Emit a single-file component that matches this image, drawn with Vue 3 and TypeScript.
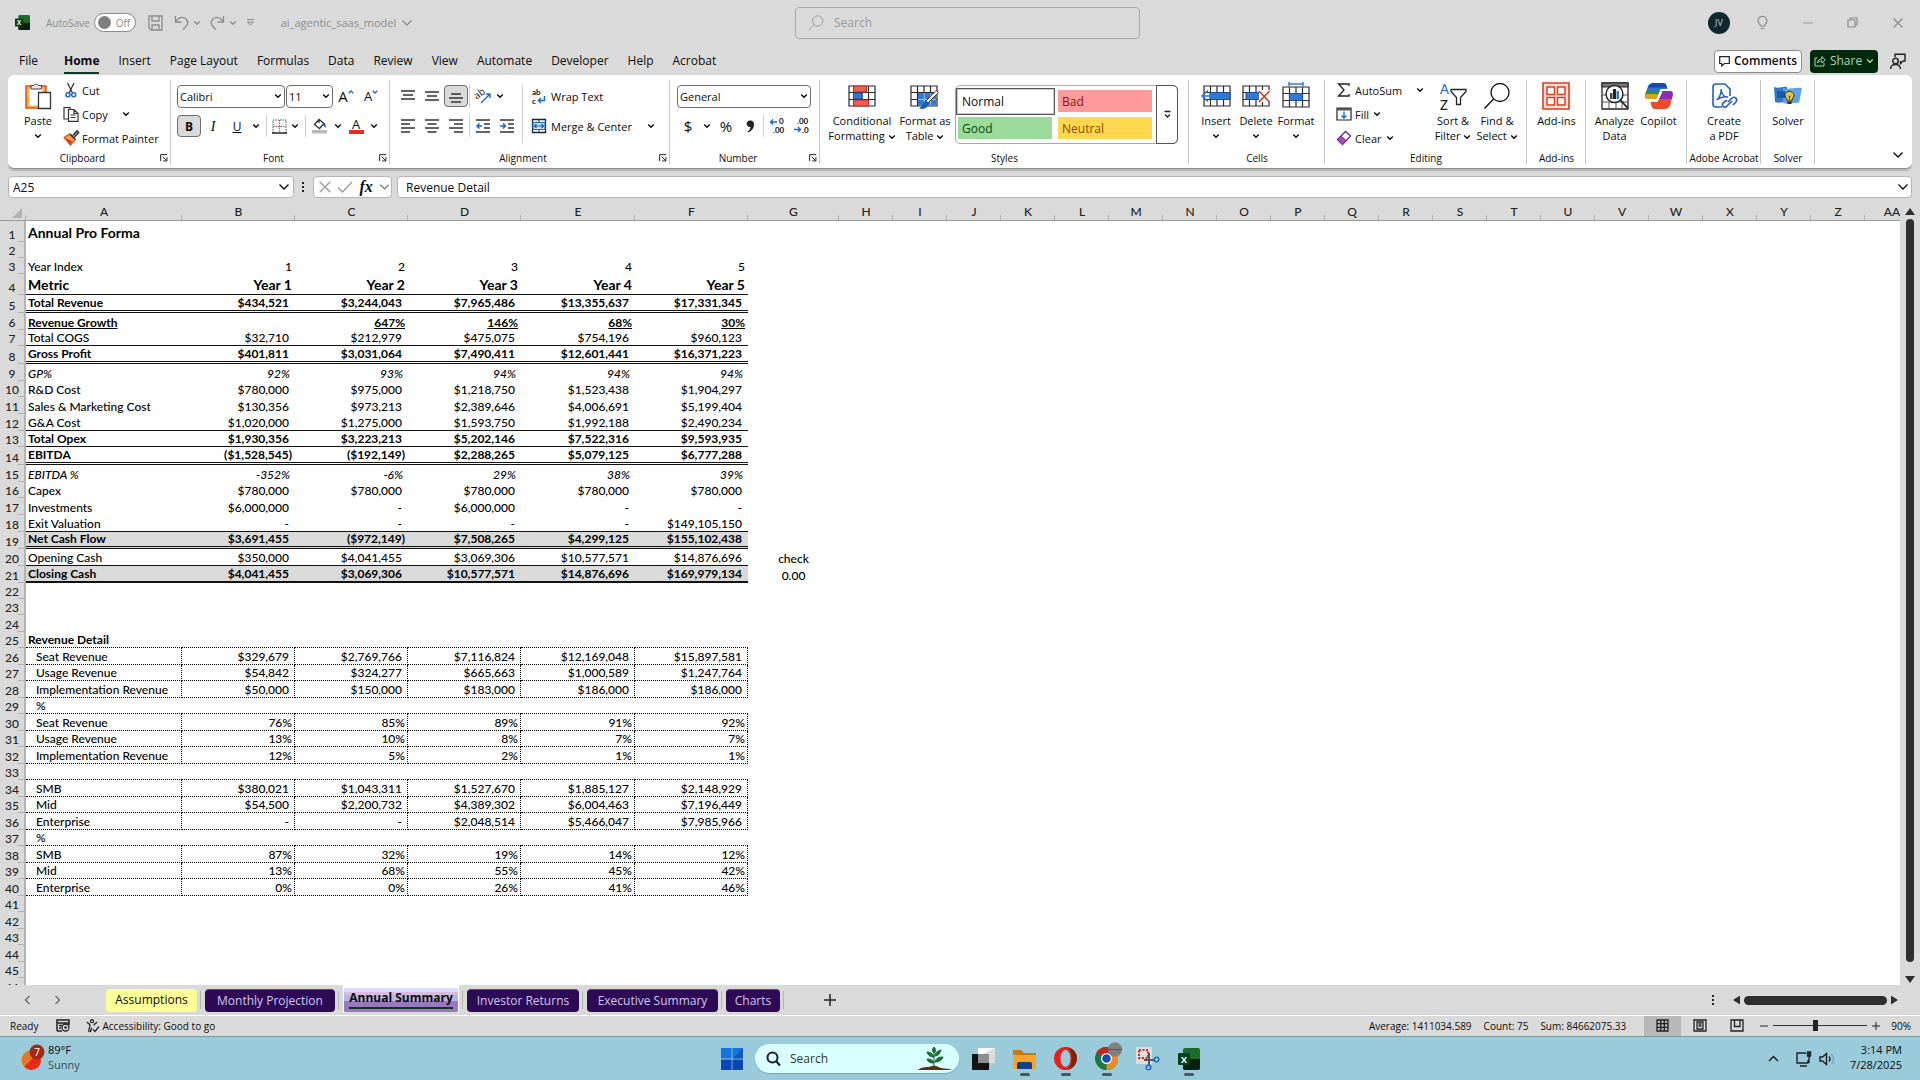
<script setup lang="ts">
import { ref } from 'vue'

type Line = 'thin' | 'double' | 'thick' | 'dots'
interface Row {
  cells: string[]
  h: number
  kind?: 'bold' | 'italic' | 'title' | 'head' | 'under' | 'total'
  line?: Line
  boxed?: boolean
  indent?: boolean
}

const menu = ['File', 'Home', 'Insert', 'Page Layout', 'Formulas', 'Data', 'Review', 'View', 'Automate', 'Developer', 'Help', 'Acrobat']

const letters = [...'ABCDEFGHIJKLMNOPQRSTUVWXYZ', 'AA']
const widths = [156, 113, 113, 113, 114, 113, 91]
const colWidth = (i: number): number => widths[i] ?? 54

const row = (h: number, text = '', extra: Partial<Row> = {}): Row => ({
  h,
  cells: text ? text.split('|') : [],
  ...extra,
})
const boxed: Partial<Row> = { boxed: true, indent: true, line: 'dots' }

const rows: Row[] = [
  row(21, 'Annual Pro Forma', { kind: 'title' }),
  row(16),
  row(16, 'Year Index|1|2|3|4|5'),
  row(21, 'Metric|Year 1|Year 2|Year 3|Year 4|Year 5', { kind: 'head', line: 'thin' }),
  row(18, 'Total Revenue|$434,521|$3,244,043|$7,965,486|$13,355,637|$17,331,345', { kind: 'bold', line: 'double' }),
  row(17, 'Revenue Growth||647%|146%|68%|30%', { kind: 'under' }),
  row(16, 'Total COGS|$32,710|$212,979|$475,075|$754,196|$960,123', { line: 'thin' }),
  row(18, 'Gross Profit|$401,811|$3,031,064|$7,490,411|$12,601,441|$16,371,223', { kind: 'bold', line: 'double' }),
  row(17, 'GP%|92%|93%|94%|94%|94%', { kind: 'italic' }),
  row(16, 'R&D Cost|$780,000|$975,000|$1,218,750|$1,523,438|$1,904,297'),
  row(17, 'Sales & Marketing Cost|$130,356|$973,213|$2,389,646|$4,006,691|$5,199,404'),
  row(17, 'G&A Cost|$1,020,000|$1,275,000|$1,593,750|$1,992,188|$2,490,234', { line: 'thin' }),
  row(16, 'Total Opex|$1,930,356|$3,223,213|$5,202,146|$7,522,316|$9,593,935', { kind: 'bold', line: 'thin' }),
  row(18, 'EBITDA|($1,528,545)|($192,149)|$2,288,265|$5,079,125|$6,777,288', { kind: 'bold', line: 'double' }),
  row(17, 'EBITDA %|-352%|-6%|29%|38%|39%', { kind: 'italic' }),
  row(16, 'Capex|$780,000|$780,000|$780,000|$780,000|$780,000'),
  row(17, 'Investments|$6,000,000|-|$6,000,000|-|-'),
  row(17, 'Exit Valuation|-|-|-|-|$149,105,150', { line: 'thin' }),
  row(17, 'Net Cash Flow|$3,691,455|($972,149)|$7,508,265|$4,299,125|$155,102,438', { kind: 'total', line: 'double' }),
  row(17, 'Opening Cash|$350,000|$4,041,455|$3,069,306|$10,577,571|$14,876,696|check', { line: 'thin' }),
  row(17, 'Closing Cash|$4,041,455|$3,069,306|$10,577,571|$14,876,696|$169,979,134|0.00', { kind: 'total', line: 'thick' }),
  row(16),
  row(16),
  row(17),
  row(16, 'Revenue Detail', { kind: 'bold', line: 'dots' }),
  row(17, 'Seat Revenue|$329,679|$2,769,766|$7,116,824|$12,169,048|$15,897,581', boxed),
  row(16, 'Usage Revenue|$54,842|$324,277|$665,663|$1,000,589|$1,247,764', boxed),
  row(17, 'Implementation Revenue|$50,000|$150,000|$183,000|$186,000|$186,000', boxed),
  row(16, '%', { indent: true, line: 'dots' }),
  row(17, 'Seat Revenue|76%|85%|89%|91%|92%', boxed),
  row(16, 'Usage Revenue|13%|10%|8%|7%|7%', boxed),
  row(17, 'Implementation Revenue|12%|5%|2%|1%|1%', boxed),
  row(16, '', { line: 'dots' }),
  row(17, 'SMB|$380,021|$1,043,311|$1,527,670|$1,885,127|$2,148,929', boxed),
  row(16, 'Mid|$54,500|$2,200,732|$4,389,302|$6,004,463|$7,196,449', boxed),
  row(17, 'Enterprise|-|-|$2,048,514|$5,466,047|$7,985,966', boxed),
  row(16, '%', { indent: true, line: 'dots' }),
  row(17, 'SMB|87%|32%|19%|14%|12%', boxed),
  row(16, 'Mid|13%|68%|55%|45%|42%', boxed),
  row(17, 'Enterprise|0%|0%|26%|41%|46%', boxed),
  row(16), row(17), row(16), row(17), row(16), row(17),
]

const cellClass = (r: Row, c: number): (string | false | undefined)[] => {
  const t = r.cells[c] ?? ''
  if (c > 5) return [c === 6 && 'check']
  return [
    r.kind,
    r.line,
    r.boxed && 'boxed',
    c === 0 ? (r.indent ? 'label indent' : 'label') : 'num',
    c > 0 && (t.startsWith('$') || t === '-') && 'money',
  ]
}

const sheets = [
  { name: 'Assumptions', width: 91, look: 'yellow' },
  { name: 'Monthly Projection', width: 130, look: 'purple' },
  { name: 'Annual Summary', width: 116, look: 'active' },
  { name: 'Investor Returns', width: 112, look: 'purple' },
  { name: 'Executive Summary', width: 131, look: 'purple' },
  { name: 'Charts', width: 54, look: 'purple' },
]

const autosave = ref(false)
const query = ref('')
const taskQuery = ref('')
const cellRef = ref('A25')
const formula = ref('Revenue Detail')
const zoom = ref(90)
</script>

<template>
  <svg class="defs" aria-hidden="true">
    <symbol id="chev" viewBox="0 0 8 6"><path d="M1.2 1.4 4 4.2l2.8-2.8" fill="none" stroke="currentColor" stroke-width="1.4" /></symbol>
    <symbol id="wide" viewBox="0 0 12 8"><path d="M1.5 1.5 6 6l4.500-4.500" fill="none" stroke="currentColor" stroke-width="1.3" /></symbol>
    <symbol id="corner" viewBox="0 0 9 9"><path d="M.7 8V.7H8M3 3l4.500 4.500M7.800 3.500v4.300H3.500" fill="none" stroke="#222" stroke-width="1.1" /></symbol>
    <symbol id="excel" viewBox="0 0 22 22">
      <rect x="5" y="0" width="17" height="22" rx="2" fill="#1a6b2a" /><path d="M5 11h17v9a2 2 0 0 1-2 2H7a2 2 0 0 1-2-2z" fill="#08210f" />
      <path d="M13 5h9v6h-9z" fill="#1f6d2c" /><rect y="5" width="12" height="12" rx="1" fill="#07401a" />
      <text x="6" y="14.500" font-size="9" font-weight="700" text-anchor="middle" fill="#fff" font-family="Open Sans, sans-serif">X</text>
    </symbol>
    <symbol id="grid" viewBox="0 0 28 22">
      <path d="M1 1h26v20H1z" fill="#fff" /><path d="M1 1h26v20H1zM1 7.500h26M1 14.500h26M7.500 1v20M14 1v20M20.500 1v20" fill="none" stroke="#2b2b2b" stroke-width="1.2" />
    </symbol>
    <symbol id="lens" viewBox="0 0 28 28"><circle cx="17" cy="10.500" r="9" fill="none" stroke="currentColor" stroke-width="1.3" /><path d="M10.500 17 1.500 26.500" stroke="currentColor" stroke-width="1.3" /></symbol>
  </svg>

  <div class="app">
    <header class="titlebar">
      <div class="left">
        <svg class="logo"><use href="#excel" /></svg>
        <label class="auto"><span>AutoSave</span><input v-model="autosave" type="checkbox" /><span class="toggle"><i></i>Off</span></label>
        <button class="q save" aria-label="Save"><svg width="15" height="16" viewBox="0 0 15 16"><path d="M1 1h13v14H3l-2-2zM4 1v5h7V1M4 15v-5h7v5" fill="none" stroke="#8c8c8c" stroke-width="1.300" /></svg></button>
        <button class="q" aria-label="Undo"><svg width="15" height="15" viewBox="0 0 15 15"><path d="M1.500 1v6h6M1.800 6.500C4 2.500 9 1 12 4s2 5.500-.5 8L9 14.500" fill="none" stroke="#8c8c8c" stroke-width="1.300" /></svg><svg class="c"><use href="#chev" /></svg></button>
        <button class="q" aria-label="Redo"><svg width="15" height="15" viewBox="0 0 15 15"><path d="M13.500 1v6h-6M13.200 6.500C11 2.500 6 1 3 4s-2 5.500.5 8L6 14.500" fill="none" stroke="#8c8c8c" stroke-width="1.300" /></svg><svg class="c"><use href="#chev" /></svg></button>
        <button class="q" aria-label="Customize toolbar"><svg width="9" height="9" viewBox="0 0 9 9"><path d="M1 1.500h7M1.500 4l3 3 3-3z" fill="none" stroke="#8c8c8c" /></svg></button>
        <button class="doc">ai_agentic_saas_model<svg width="12" height="8"><use href="#wide" /></svg></button>
      </div>
      <label class="search"><svg width="16" height="16"><use href="#lens" /></svg><input v-model="query" placeholder="Search" aria-label="Search" /></label>
      <div class="right">
        <span class="avatar">JV</span>
        <button class="w" aria-label="Tips"><svg width="11" height="14" viewBox="0 0 11 14"><path d="M3.500 10C3.500 8 1 7.500 1 4.800a4.400 4.400 0 0 1 9 0C10 7.500 7.500 8 7.500 10zM3.800 12.500h3.500" fill="none" stroke="#8c8c8c" stroke-width="1.200" /></svg></button>
        <button class="w" aria-label="Minimize"><svg width="10" height="10" viewBox="0 0 10 10"><path d="M0 5h10" stroke="#999" /></svg></button>
        <button class="w" aria-label="Restore"><svg width="11" height="11" viewBox="0 0 11 11"><path d="M1 3h7v7H1zM3 3V1h7v7H8" fill="none" stroke="#8c8c8c" stroke-width="1.200" /></svg></button>
        <button class="w" aria-label="Close"><svg width="10" height="10" viewBox="0 0 10 10"><path d="m.5.5 9 9m0-9-9 9" stroke="#8c8c8c" stroke-width="1.200" /></svg></button>
      </div>
    </header>

    <nav class="menubar">
      <a v-for="m in menu" :key="m" href="#" :class="{ on: m === 'Home' }">{{ m }}</a>
      <span class="grow"></span>
      <button class="comments"><svg width="11" height="11" viewBox="0 0 11 11"><path d="M.7.7h9.600v6.800H5.500L2.700 10V7.500h-2z" fill="none" stroke="#222" stroke-width="1.200" /></svg>Comments</button>
      <button class="share"><svg width="12" height="12" viewBox="0 0 12 12"><path d="M3.500 3H1v8h9V8M3.500 8c0-3 2-4 4.500-4V1.500L11.300 5 8 8V6C6 6 4.500 6.500 3.500 8z" fill="none" stroke="#a9d8b4" /></svg>Share<svg class="c"><use href="#chev" /></svg></button>
      <button class="person" aria-label="Catch up"><svg width="17" height="17" viewBox="0 0 17 17"><circle cx="6.500" cy="8" r="2.800" fill="none" stroke="#222" stroke-width="1.400" /><path d="M1.500 16c0-6 10-6 10 0M6 4V1.200h10V8h-2l-2.500 2.500V8" fill="none" stroke="#222" stroke-width="1.400" /></svg></button>
    </nav>

    <section class="ribbon">
      <div class="group g-clip">
        <div class="body">
          <button class="big paste"><svg width="28" height="28" viewBox="0 0 28 28"><path d="M2 4h20v22H2z" fill="#f7a83c" stroke="#d8531d" stroke-width="1.500" /><path d="M5 6h14v18H5z" fill="#fff" stroke="#f0c070" /><path d="M7 7V3.500h3a2.500 2.500 0 0 1 4.500 0h3V7z" fill="#e8e8e8" stroke="#444" /><path d="M14.500 10.500h12v16h-12z" fill="#fff" stroke="#333" stroke-width="1.300" /></svg><span>Paste</span><svg class="c"><use href="#chev" /></svg></button>
          <div class="stack">
            <button class="line"><svg viewBox="0 0 16 16"><path d="M4.500 1 9.500 11M11 1 6 11" stroke="#333" stroke-width="1.300" /><circle cx="5" cy="12.800" r="2" fill="none" stroke="#1b6ac9" stroke-width="1.500" /><circle cx="10.700" cy="12.800" r="2" fill="none" stroke="#1b6ac9" stroke-width="1.500" /></svg>Cut</button>
            <button class="line"><svg viewBox="0 0 16 16"><path d="M5 13H1V1.500h6V4M5.500 3.500H11l4 4v7.800H5.500zM11 3.500v4h4M7.500 9h5M7.500 11.500h5" fill="none" stroke="#333" stroke-width="1.200" /></svg>Copy<svg class="c push"><use href="#chev" /></svg></button>
            <button class="line"><svg viewBox="0 0 16 16"><path d="M1 7.500 6.500 4l6 5.500-5 5.500z" fill="#f6a04a" stroke="#d8531d" stroke-width="1.200" /><path d="M1 7.500 7.500 15l1.500-4z" fill="#d8391d" /><path d="m7 4 5 5M10 5.500 14 1l1.500 1.500L11.500 7" fill="none" stroke="#333" stroke-width="1.700" /></svg>Format Painter</button>
          </div>
        </div>
        <div class="foot launch"><span>Clipboard</span><button aria-label="Clipboard settings"><svg><use href="#corner" /></svg></button></div>
      </div>

      <div class="group g-font">
        <div class="body rows">
          <div class="r r-a">
            <span class="pick family"><select aria-label="Font"><option>Calibri</option></select><svg class="c"><use href="#chev" /></svg></span>
            <span class="pick size"><select aria-label="Font size"><option>11</option></select><svg class="c"><use href="#chev" /></svg></span>
            <button class="ib lg" aria-label="Increase font size">A<svg class="sup" viewBox="0 0 6 4"><path d="m.7 3.300 2.300-2.300 2.300 2.300" fill="none" stroke="#1b6ac9" stroke-width="1.300" /></svg></button>
            <button class="ib md" aria-label="Decrease font size">A<svg class="sup" viewBox="0 0 6 4"><path d="m.7.7 2.300 2.300 2.300-2.300" fill="none" stroke="#1b6ac9" stroke-width="1.300" /></svg></button>
          </div>
          <div class="r">
            <button class="ib on"><b>B</b></button><button class="ib"><i class="serif">I</i></button><button class="ib"><u>U</u></button><button class="ch" aria-label="Underline options"><svg class="c"><use href="#chev" /></svg></button>
            <i class="sep"></i>
            <button class="ib w18" aria-label="Borders"><svg width="15" height="15" viewBox="0 0 15 15"><path d="M1 14V1h13v13" fill="none" stroke="#555" stroke-dasharray="1.500 1" /><path d="M7.500 1v13M1 7.500h13" stroke="#b55" stroke-dasharray="1.500 1" /><path d="M0 14h15" stroke="#222" stroke-width="1.500" /></svg></button><button class="ch" aria-label="Border options"><svg class="c"><use href="#chev" /></svg></button>
            <i class="sep"></i>
            <button class="ib w22" aria-label="Fill color"><svg width="16" height="16" viewBox="0 0 16 16"><path d="M7 1.500 2.500 6.500l5 4 4.500-5zM7 1.500V5" fill="none" stroke="#333" stroke-width="1.300" /><path d="M11.500 4.500c2 1 2.500 3 2 5.500l-2-2.500z" fill="#1b4f9c" /><path d="M0 12h15v3.500H0z" fill="#b9b9b9" /></svg></button><button class="ch" aria-label="Fill options"><svg class="c"><use href="#chev" /></svg></button>
            <button class="ib w22 ink" aria-label="Font color">A</button><button class="ch" aria-label="Font color options"><svg class="c"><use href="#chev" /></svg></button>
          </div>
        </div>
        <div class="foot launch"><span>Font</span><button aria-label="Font settings"><svg><use href="#corner" /></svg></button></div>
      </div>

      <div class="group g-align">
        <div class="body">
          <div class="rows">
            <div class="r">
              <button class="ib" aria-label="Top align"><svg width="14" height="14" viewBox="0 0 14 14"><path d="M0 2h14M2 6h10M0 10h14" stroke="#333" stroke-width="1.300" /></svg></button>
              <button class="ib" aria-label="Middle align"><svg width="14" height="14" viewBox="0 0 14 14"><path d="M0 3h14M2 7h10M0 11h14" stroke="#333" stroke-width="1.300" /></svg></button>
              <button class="ib on" aria-label="Bottom align"><svg width="14" height="14" viewBox="0 0 14 14"><path d="M2 5h10M0 9h14M2 13h10" stroke="#333" stroke-width="1.300" /></svg></button>
              <i class="sep tight"></i>
              <button class="ib" aria-label="Orientation"><svg width="17" height="16" viewBox="0 0 17 16"><text x="0" y="9" font-size="10" transform="rotate(-35 5 8)" fill="#111" font-family="Open Sans, sans-serif">ab</text><path d="m6 15 9-9m-4 0h4v4" fill="none" stroke="#1b6ac9" stroke-width="1.400" /></svg></button>
              <button class="ch sm" aria-label="Orientation options"><svg class="c"><use href="#chev" /></svg></button>
            </div>
            <div class="r">
              <button class="ib" aria-label="Align left"><svg width="14" height="14" viewBox="0 0 14 14"><path d="M0 1h14M0 5h9M0 9h14M0 13h9" stroke="#333" stroke-width="1.300" /></svg></button>
              <button class="ib" aria-label="Center"><svg width="14" height="14" viewBox="0 0 14 14"><path d="M0 1h14M2.500 5h9M0 9h14M2.500 13h9" stroke="#333" stroke-width="1.300" /></svg></button>
              <button class="ib" aria-label="Align right"><svg width="14" height="14" viewBox="0 0 14 14"><path d="M0 1h14M5 5h9M0 9h14M5 13h9" stroke="#333" stroke-width="1.300" /></svg></button>
              <i class="sep tight"></i>
              <button class="ib" aria-label="Decrease indent"><svg width="14" height="14" viewBox="0 0 14 14"><path d="M0 1h14M8 5h6M8 9h6M0 13h14" stroke="#333" stroke-width="1.300" /><path d="M6 7H1m2.500-2.500L1 7l2.500 2.500" fill="none" stroke="#1b6ac9" stroke-width="1.500" /></svg></button>
              <button class="ib" aria-label="Increase indent"><svg width="14" height="14" viewBox="0 0 14 14"><path d="M0 1h14M8 5h6M8 9h6M0 13h14" stroke="#333" stroke-width="1.300" /><path d="M0 7h5.500M3 4.500 5.500 7 3 9.500" fill="none" stroke="#1b6ac9" stroke-width="1.500" /></svg></button>
            </div>
          </div>
          <i class="tall"></i>
          <div class="rows">
            <button class="line r"><svg viewBox="0 0 16 16" font-size="8" fill="#111" font-family="Lato, sans-serif" font-weight="700"><text x="1" y="6.500">ab</text><text x="1" y="16">c</text><path d="M13.500 8v4.500H7.500M10 10l-2.500 2.500L10 15" fill="none" stroke="#1b6ac9" stroke-width="1.500" /></svg>Wrap Text</button>
            <button class="line r"><svg viewBox="0 0 16 16"><path d="M1.500 1.500h13v13h-13z" fill="#fff" stroke="#222" stroke-width="1.300" /><path d="M2 4.500h12v7H2z" fill="#cfe2fb" stroke="#1b6ac9" stroke-width="1.200" /><path d="M3.500 8h9M5.500 6l-2 2 2 2m5-4 2 2-2 2M8 1.500v3m0 7v3" fill="none" stroke="#1b5ab0" stroke-width="1.200" /></svg>Merge &amp; Center<svg class="c push"><use href="#chev" /></svg></button>
          </div>
        </div>
        <div class="foot launch"><span>Alignment</span><button aria-label="Alignment settings"><svg><use href="#corner" /></svg></button></div>
      </div>

      <div class="group g-num">
        <div class="body rows">
          <div class="r"><span class="pick format"><select aria-label="Number format"><option>General</option></select><svg class="c"><use href="#chev" /></svg></span></div>
          <div class="r">
            <button class="ib lg">$</button><button class="ch" aria-label="Currency options"><svg class="c"><use href="#chev" /></svg></button><button class="ib lg">%</button>
            <button class="ib" aria-label="Comma style"><svg width="9" height="13" viewBox="0 0 9 13"><path d="M4.500.5A3.300 3.300 0 1 0 4.500 7c-.2 2-1.200 3.500-3 4.500l.8 1C6 11 8 8 8 4.500A3.600 3.600 0 0 0 4.500.5z" fill="#222" /></svg></button>
            <i class="sep tight"></i>
            <button class="ib" aria-label="Increase decimal"><svg width="16" height="16" viewBox="0 0 16 16" font-size="8" fill="#111" font-family="Lato, sans-serif" font-weight="700"><text x="10" y="6">0</text><text x="4" y="15">.00</text><path d="M8 4H1.500M4 1.500 1.500 4 4 6.500" fill="none" stroke="#1b6ac9" stroke-width="1.400" /></svg></button>
            <button class="ib" aria-label="Decrease decimal"><svg width="16" height="16" viewBox="0 0 16 16" font-size="8" fill="#111" font-family="Lato, sans-serif" font-weight="700"><text x="4" y="6">.00</text><text x="9" y="15">.0</text><path d="M1 11.500h6.500M5 9l2.500 2.500L5 14" fill="none" stroke="#1b6ac9" stroke-width="1.400" /></svg></button>
          </div>
        </div>
        <div class="foot launch"><span>Number</span><button aria-label="Number settings"><svg><use href="#corner" /></svg></button></div>
      </div>

      <div class="group g-styles">
        <div class="body">
          <button class="big cond"><svg width="28" height="28" viewBox="0 -3 28 28"><use href="#grid" width="28" height="22" /><path d="M5.500 1h13v6h-13zM5.500 15h15v6h-15z" fill="#ec5f55" stroke="#c8281e" /><path d="M5.500 8h8.500v6H5.500z" fill="#2f78d6" stroke="#1b4f9c" /></svg><span>Conditional<br />Formatting <svg class="c"><use href="#chev" /></svg></span></button>
          <button class="big fat"><svg width="30" height="28" viewBox="0 -3 30 28"><use href="#grid" width="28" height="22" /><path d="M8 8h18v12.500H8z" fill="#2f78d6" /><path d="M14.300 8v12.500M20.600 8v12.500M8 14.500h18" stroke="#9cc2f2" /><path d="M28.500 7.500 18 18l-2-2L26 5.500z" fill="#fff" stroke="#333" /><path d="M16 16l2.500 2.500C18 24 12 24.500 9 23.500c3-1 3-6 7-7.500z" fill="#1b5fb4" /></svg><span>Format as<br />Table <svg class="c"><use href="#chev" /></svg></span></button>
          <div class="gallery">
            <button class="normal">Normal</button><button class="bad">Bad</button><button class="good">Good</button><button class="neutral">Neutral</button>
            <button class="more" aria-label="More styles"><svg width="9" height="9" viewBox="0 0 9 9"><path d="M1.500 1.500h6M2 4.500 4.500 7 7 4.500" fill="none" stroke="#222" stroke-width="1.300" /></svg></button>
          </div>
        </div>
        <div class="foot"><span>Styles</span></div>
      </div>

      <div class="group g-cells">
        <div class="body">
          <button class="big w40"><svg width="30" height="28" viewBox="-2 -3 30 28"><use href="#grid" width="28" height="22" /><path d="M7 7.500h20v7H7z" fill="#2f78d6" stroke="#1b4f9c" /><path d="M14 11H-1m6-5.500L-1 11l6 5.500" fill="none" stroke="#2f78d6" stroke-width="1.600" /></svg><span>Insert</span><svg class="c"><use href="#chev" /></svg></button>
          <button class="big w40"><svg width="28" height="28" viewBox="0 -3 28 28"><use href="#grid" width="28" height="22" /><path d="M4 7.500h14v7H4z" fill="#2f78d6" stroke="#1b4f9c" /><path d="M17 5h11v12H17z" fill="#fff" /><path d="m17 6 10.500 11m0-11L17 17" stroke="#e5281c" stroke-width="1.500" /></svg><span>Delete</span><svg class="c"><use href="#chev" /></svg></button>
          <button class="big w40"><svg width="28" height="28" viewBox="0 -4 28 28"><use href="#grid" width="28" height="22" /><path d="M7.500 7.500h13v7h-13z" fill="#2f78d6" stroke="#1b4f9c" /><path d="M7-2h14M7-4v4m14-4v4" stroke="#2f78d6" stroke-width="1.500" /></svg><span>Format</span><svg class="c"><use href="#chev" /></svg></button>
        </div>
        <div class="foot"><span>Cells</span></div>
      </div>

      <div class="group g-edit">
        <div class="body">
          <div class="stack">
            <button class="line"><svg viewBox="0 0 16 16"><path d="M13 4V2H2.500L8 8l-5.500 6H13v-2" fill="none" stroke="#222" stroke-width="1.300" /></svg>AutoSum<svg class="c push"><use href="#chev" /></svg></button>
            <button class="line"><svg viewBox="0 0 16 16"><path d="M1 2h14v12H1z" fill="#fff" stroke="#222" stroke-width="1.200" /><path d="M1 2h14v2.500H1z" fill="#555" /><path d="M8 5.500V12M5.500 9.500 8 12l2.500-2.500" fill="none" stroke="#1b6ac9" stroke-width="1.400" /></svg>Fill<svg class="c near"><use href="#chev" /></svg></button>
            <button class="line"><svg viewBox="0 0 16 16"><path d="M1.500 9.500 9.500 1.500l5 4.500-8 8.500z" fill="#fff" stroke="#6b2b8c" stroke-width="1.300" /><path d="M1.500 9.500 5 6l5 4.500-3.500 4z" fill="#b04aa8" stroke="#6b2b8c" /></svg>Clear<svg class="c near"><use href="#chev" /></svg></button>
          </div>
          <button class="big w44"><svg width="28" height="28" viewBox="0 0 28 28" font-size="13" font-family="Lato, sans-serif"><text x="1" y="12" fill="#1b6ac9">A</text><text x="1" y="28" fill="#222">Z</text><path d="M12 7.500h15v2l-5.500 6v7h-4v-7l-5.500-6z" fill="none" stroke="#222" stroke-width="1.300" /></svg><span>Sort &amp;<br />Filter <svg class="c"><use href="#chev" /></svg></span></button>
          <button class="big w44"><svg width="28" height="28"><use href="#lens" /></svg><span>Find &amp;<br />Select <svg class="c"><use href="#chev" /></svg></span></button>
        </div>
        <div class="foot"><span>Editing</span></div>
      </div>

      <div class="group g-add">
        <div class="body mid">
          <button class="big"><svg width="28" height="28" viewBox="0 0 28 28"><path d="M1 1h26v26H1z" fill="#fbe3dc" stroke="#e03a1c" stroke-width="1.600" /><path d="M5 5h7.500v7.500H5zM15.500 5H23v7.500h-7.500zM5 15.500h7.500V23H5zM15.500 15.500H23V23h-7.500z" fill="#fff" stroke="#e03a1c" stroke-width="1.500" /></svg><span>Add-ins</span></button>
        </div>
        <div class="foot"><span>Add-ins</span></div>
      </div>

      <div class="group g-data">
        <div class="body mid">
          <button class="big w44"><svg width="28" height="28" viewBox="0 0 28 28"><path d="M1 1h26v26H1z" fill="#fff" stroke="#222" stroke-width="1.300" /><path d="M1 1h26v4H1z" fill="#777" stroke="#222" /><path d="M1 13h26M1 20h26M8 20v7M15 20v7M21 20v7" stroke="#555" /><circle cx="13.500" cy="12" r="8.500" fill="#fff" stroke="#222" stroke-width="1.400" /><path d="m19.500 18 7 8" stroke="#222" stroke-width="1.800" /><path d="M9 11h2.500v6H9z" fill="#444" /><path d="M12 7h3v10h-3z" fill="#222" /><path d="M15.500 9H18v8h-2.500z" fill="#2f78d6" /></svg><span>Analyze<br />Data</span></button>
          <button class="big w44"><svg width="28" height="28" viewBox="0 0 28 28"><path d="M9 1h9c2 0 3 1 3.500 3l1 3h-7L12 17H3C0 17-.3 14 .7 11l2-6C3.800 2 6 1 9 1z" fill="#2878c8" /><path d="M9 1h9c2 0 3 1 3.500 3l.5 1.500H3C4 2 6 1 9 1z" fill="#1b45b0" /><path d="M1.500 9h13L12 17H3C0 17-.3 14 .7 11z" fill="#3a8a3c" /><path d="M.5 12H13l-1 5H3c-2.500 0-3-2-2.500-5z" fill="#d6a61c" /><path d="M19 27h-9c-2 0-3-1-3.500-3l-1-4h7L16 9h9c3 0 3.300 3 2.300 6l-2 8c-1 3-3.300 4-6.300 4z" fill="#ec4a2c" /><path d="M16 9h9c3 0 3.300 3 2.300 6l-.5 2H14z" fill="#8b2fb0" /><path d="M15 9.500h2.500L13 19h-2.500z" fill="#fff" /></svg><span>Copilot</span></button>
        </div>
        <div class="foot"></div>
      </div>

      <div class="group g-pdf">
        <div class="body mid">
          <button class="big"><svg width="28" height="28" viewBox="0 0 28 28"><path d="M12 25H6a3 3 0 0 1-3-3V5a3 3 0 0 1 3-3h9l5 5v7" fill="none" stroke="#1f5fd0" stroke-width="1.600" /><path d="M6.500 18c3-2 5-7 4.500-11 .5 5 3 8 7 8-4-1-8 .5-11.500 3z" fill="none" stroke="#1f5fd0" stroke-width="1.400" /><path d="m18 20 4-4c3-2 6 1 4 4l-3 3M22 19l-5 5c-2 3-6 0-4-3l4-3" fill="none" stroke="#1f5fd0" stroke-width="1.600" /></svg><span>Create<br />a PDF</span></button>
        </div>
        <div class="foot"><span>Adobe Acrobat</span></div>
      </div>

      <div class="group g-solver">
        <div class="body mid">
          <button class="big"><svg width="30" height="28" viewBox="0 0 30 28"><path d="M1 5c5 2 9-1 13 0v15c-4-1-7 2-12 0z" fill="#2f78c4" /><path d="M10 6c6 2 12-1 19 0l-3 15c-5-1-10 2-16 0z" fill="#5da2e2" /><path d="M4 9h8v7H4z" fill="#1b5ab0" /><path d="M14 19v-2c-3-2-2.500-7.500 2.500-7.500s5.500 5.500 2.500 7.500v2z" fill="#f9c83c" stroke="#333" /><path d="M14.500 19.500h4v2.500h-4z" fill="#333" /><path d="m15 13.500 1.500 1.500 1.500-1.500M16.500 15v3" fill="none" stroke="#444" /></svg><span>Solver</span></button>
        </div>
        <div class="foot"><span>Solver</span></div>
      </div>
      <button class="collapse" aria-label="Collapse ribbon"><svg width="12" height="8"><use href="#wide" /></svg></button>
    </section>

    <section class="formula">
      <label class="field name"><input v-model="cellRef" aria-label="Name box" /><svg width="12" height="8"><use href="#wide" /></svg></label>
      <i class="grip"></i>
      <div class="field fx">
        <button aria-label="Cancel"><svg width="12" height="12" viewBox="0 0 12 12"><path d="m.7.700 10.600 10.600m0-10.600L.7 11.300" stroke="#999" stroke-width="1.300" /></svg></button>
        <button aria-label="Enter"><svg width="16" height="12" viewBox="0 0 16 12"><path d="m1 6.500 4.500 4.500L15 1" fill="none" stroke="#999" stroke-width="1.300" /></svg></button>
        <button class="fn">fx</button>
        <button class="dim" aria-label="Function list"><svg width="11" height="8"><use href="#wide" /></svg></button>
      </div>
      <label class="field value"><input v-model="formula" aria-label="Formula" /><svg width="12" height="8"><use href="#wide" /></svg></label>
    </section>

    <main class="workspace">
      <div class="sheet">
        <table>
          <colgroup><col class="rowcol" /><col v-for="(l, i) in letters" :key="l" :style="{ width: colWidth(i) + 'px' }" /></colgroup>
          <thead><tr><th class="all"><i></i></th><th v-for="l in letters" :key="l" scope="col">{{ l }}</th></tr></thead>
          <tbody>
            <tr v-for="(r, n) in rows" :key="n" :style="{ height: r.h + 'px' }">
              <th scope="row">{{ n + 1 }}</th>
              <td v-for="(l, c) in letters" :key="l" :class="cellClass(r, c)">{{ r.cells[c] }}</td>
            </tr>
          </tbody>
        </table>
      </div>
      <div class="vbar"><i class="tri up"></i><i class="thumb"></i><i class="tri down"></i></div>
    </main>

    <footer class="tabs">
      <button class="nav" aria-label="Previous sheet"><svg width="7" height="10" viewBox="0 0 7 10"><path d="M5.500 1 1.500 5l4 4" fill="none" stroke="#666" stroke-width="1.300" /></svg></button>
      <button class="nav" aria-label="Next sheet"><svg width="7" height="10" viewBox="0 0 7 10"><path d="m1.500 1 4 4-4 4" fill="none" stroke="#666" stroke-width="1.300" /></svg></button>
      <div class="sheets">
        <template v-for="s in sheets" :key="s.name">
          <button class="tab" :class="s.look" :style="{ minWidth: s.width + 'px' }"><span>{{ s.name }}</span></button><i class="div"></i>
        </template>
      </div>
      <button class="plus" aria-label="New sheet"><svg width="12" height="12" viewBox="0 0 12 12"><path d="M6 0v12M0 6h12" stroke="#222" stroke-width="1.500" /></svg></button>
      <span class="grow"></span>
      <i class="grip"></i>
      <i class="tri lt"></i><i class="hthumb"></i><i class="tri rt"></i>
    </footer>

    <footer class="status">
      <span>Ready</span>
      <svg class="macro" width="14" height="13" viewBox="0 0 14 13"><path d="M1 12V1h12v5M1 4h12M3 6.500h3M3 9h2M1 12h5" fill="none" stroke="#222" stroke-width="1.500" /><circle cx="9.500" cy="8.500" r="3.500" fill="#dadada" stroke="#222" stroke-width="1.300" /><circle cx="9.500" cy="8.500" r="1.300" fill="#222" /></svg>
      <svg class="acc" width="14" height="14" viewBox="0 0 14 14"><circle cx="6" cy="2.200" r="1.500" fill="none" stroke="#222" stroke-width="1.200" /><path d="M1 3c1 2 3 1.500 3 3.500 0 3-2 4-1 6.500M11 3C10 5 8 4.500 8 6.500M6 9c-1 1-1 3-2 4" fill="none" stroke="#222" stroke-width="1.300" /><path d="m7 10.500 2 2 4-5" fill="none" stroke="#222" stroke-width="1.300" /></svg>
      <span>Accessibility: Good to go</span>
      <span class="grow"></span>
      <span class="stat">Average: 1411034.589</span><span class="stat">Count: 75</span><span class="stat">Sum: 84662075.33</span>
      <button class="view on" aria-label="Normal view"><svg width="13" height="13" viewBox="0 0 13 13"><path d="M1 1h11v11H1zM4.700 1v11M8.300 1v11M1 4.700h11M1 8.300h11" fill="none" stroke="#222" stroke-width="1.300" /></svg></button>
      <button class="view" aria-label="Page layout view"><svg width="14" height="13" viewBox="0 0 14 13"><path d="M1 1h12v11H1zM4 3h6v7H4zM5.500 5h3M5.500 7h3" fill="none" stroke="#222" stroke-width="1.300" /></svg></button>
      <button class="view" aria-label="Page break view"><svg width="14" height="13" viewBox="0 0 14 13"><path d="M1 1h12v11H1zM4.500 1v6.500H10V1" fill="none" stroke="#222" stroke-width="1.300" /></svg></button>
      <button class="step" aria-label="Zoom out"><svg width="8" height="8" viewBox="0 0 8 8"><path d="M0 4h8" stroke="#222" /></svg></button>
      <input v-model="zoom" class="zoom" type="range" min="10" max="190" aria-label="Zoom" />
      <button class="step" aria-label="Zoom in"><svg width="8" height="8" viewBox="0 0 8 8"><path d="M0 4h8M4 0v8" stroke="#222" /></svg></button>
      <span class="pct">90%</span>
    </footer>

    <footer class="taskbar">
      <div class="weather">
        <svg width="26" height="26" viewBox="0 0 26 26"><circle cx="11" cy="16" r="9.500" fill="#e87722" /><path d="M17.700 9.300A9.500 9.500 0 1 1 4.300 22.700z" fill="#e8291c" /><circle cx="17" cy="8" r="7.500" fill="#a12a14" /><text x="17" y="12" font-size="10" text-anchor="middle" fill="#fff" font-family="Open Sans, sans-serif">7</text></svg>
        <p>89°F<br /><span>Sunny</span></p>
      </div>
      <div class="apps">
        <button class="app-icon" aria-label="Start"><svg width="22" height="22" viewBox="0 0 22 22"><path d="M0 0h10.600v10.600H0zM11.400 0H22v10.600H11.400z" fill="#1473dc" /><path d="M0 11.400h10.600V22H0zM11.400 11.400H22V22H11.400z" fill="#0a46b4" /><path d="M22 0v10.600H12z" fill="#0f58b4" /></svg></button>
        <label class="pill">
          <svg width="15" height="15" viewBox="0 0 15 15"><circle cx="6.500" cy="6.500" r="5" fill="none" stroke="#1c1c24" stroke-width="2" /><path d="m10 10 4 4.500" stroke="#1c1c24" stroke-width="2" /></svg>
          <input v-model="taskQuery" placeholder="Search" aria-label="Search Windows" />
          <svg width="34" height="24" viewBox="0 0 34 24"><path d="M0 23c4-4 10-2 14-4 5-1 5 1 9 2s7 0 11 2z" fill="#5b2d12" /><path d="M16 20V2M16 16c-4 0-6-1-7-4 4 0 6 1 7 4zM17 15c4 0 7-2 8-5-4 0-7 1-8 5zM16 10c-4 0-6-2-7-5 4 0 6 2 7 5zM17 9c3 0 5-3 6-6-4 1-6 3-6 6zM16 6c-2-1-2-4 0-6 2 2 2 5 0 6z" fill="#157a35" stroke="#12602b" /></svg>
        </label>
        <button class="app-icon" aria-label="Task view"><svg width="24" height="22" viewBox="0 0 24 22"><path d="M0 6h17v16H0z" fill="#111" /><path d="M6 0h17v15H6z" fill="#dcdcdc" /><path d="M6 0h17L6 8z" fill="#fff" /><path d="M6 6h11v9H6z" fill="#8e8e8e" /></svg></button>
        <button class="app-icon run" aria-label="File Explorer"><svg width="23" height="22" viewBox="0 0 23 22"><path d="M0 2h8l3 3h12v16H0z" fill="#c97716" /><path d="M0 7h23v14H0z" fill="#f7a52a" /><path d="M4 16a2 2 0 0 1 2-2h11a2 2 0 0 1 2 2v5H4z" fill="#123f8c" /></svg></button>
        <button class="app-icon run" aria-label="Opera"><svg width="23" height="23" viewBox="0 0 23 23"><circle cx="11.500" cy="11.500" r="11.500" fill="#e2231a" /><path d="M14 .3A11.500 11.500 0 0 1 14 22.700c5-5 5-17 0-22.400z" fill="#7a2512" /><ellipse cx="11.500" cy="11.500" rx="5" ry="8.500" fill="#9acbda" /></svg></button>
        <button class="app-icon run" aria-label="Chrome"><svg width="23" height="23" viewBox="0 0 23 23"><circle cx="11.500" cy="11.500" r="11.500" fill="#1d7a3c" /><path d="M11.500 11.500 1.500 5.800A11.500 11.500 0 0 1 21.500 5.800z" fill="#c3261b" /><path d="M11.500 11.500 21.500 5.800A11.500 11.500 0 0 1 11.500 23z" fill="#f08a24" /><circle cx="11.500" cy="11.500" r="5.500" fill="#fff" /><circle cx="11.500" cy="11.500" r="4.300" fill="#1550b8" /><circle cx="20" cy="2.500" r="7.200" fill="#808080" /><path d="M13 2.500h14" stroke="#555" /></svg></button>
        <button class="app-icon" aria-label="Snipping Tool"><svg width="24" height="24" viewBox="0 0 24 24"><path d="M0 0h16v17H0z" fill="#dedede" /><path d="M3 3h9v8H3z" fill="none" stroke="#c33020" stroke-width="2" stroke-dasharray="2 1.500" /><path d="M13 6v12M8 13h11" stroke="#555" stroke-width="2" /><circle cx="20.500" cy="12.500" r="2.300" fill="none" stroke="#1b6ac9" stroke-width="1.500" /><circle cx="12.500" cy="20.500" r="2.300" fill="none" stroke="#1b6ac9" stroke-width="1.500" /></svg></button>
        <button class="app-icon run" aria-label="Excel"><svg width="22" height="22"><use href="#excel" /></svg></button>
      </div>
      <div class="tray">
        <button aria-label="Hidden icons"><svg width="11" height="7" viewBox="0 0 11 7"><path d="M1 6l4.500-4.500L10 6" fill="none" stroke="#222" stroke-width="1.500" /></svg></button>
        <svg class="net" width="16" height="16" viewBox="0 0 16 16"><path d="M10 2H1v10h11V9M4 15h7M13 1v5M11.500 1h3v4h-3zM13 6v6" fill="none" stroke="#222" stroke-width="1.400" /></svg>
        <svg width="16" height="14" viewBox="0 0 16 14"><path d="M1 5h2.500L7.500 1.500v11L3.500 9H1z" fill="none" stroke="#222" stroke-width="1.400" /><path d="M10 4.500c1.300 1.500 1.300 3.500 0 5" fill="none" stroke="#222" stroke-width="1.300" /><path d="M12.500 2c2.500 3 2.500 7 0 10" fill="none" stroke="#7a9cc4" stroke-width="1.300" /></svg>
        <p>3:14 PM<br />7/28/2025</p>
      </div>
    </footer>
  </div>
</template>

<style>
html, body { margin: 0; background: #dadada; }
</style>

<style scoped>
* { box-sizing: border-box; }
.defs { position: absolute; width: 0; height: 0; }
.app { display: flex; flex-direction: column; height: 100vh; overflow: hidden; background: #dadada; color: #0c0c0c; font: 500 12px/16px "Open Sans", "Noto Sans", sans-serif; }
button, input, select { margin: 0; padding: 0; border: 0; background: none; font: inherit; color: inherit; outline: 0; appearance: none; border-radius: 0; }
button { display: flex; align-items: center; justify-content: center; }
svg { flex: none; overflow: visible; }
p { margin: 0; }
.grow { flex: 1; }
.c { width: 8px; height: 6px; }
.grip { width: 2px; height: 11px; background: repeating-linear-gradient(#222 0 2px, transparent 2px 4px); }

.titlebar { display: grid; grid-template-columns: 1fr 345px 1fr; align-items: center; height: 45px; padding-left: 15px; color: #8c8c8c; font-weight: 400; }
.left { display: flex; align-items: center; }
.logo { width: 15px; height: 15px; }
.auto { display: flex; align-items: center; gap: 4px; margin-left: 16px; font-size: 10px; }
.auto input { position: absolute; opacity: 0; }
.toggle { display: flex; align-items: center; gap: 5px; width: 42px; height: 19px; padding-left: 3px; border: 1px solid #8c8c8c; border-radius: 10px; background: #fff; }
.toggle i { width: 13px; height: 13px; border-radius: 50%; background: #7f7f7f; }
.q { gap: 4px; margin-left: 9px; }
.save { margin: 0 2px 0 12px; }
.doc { gap: 5px; margin-left: 26px; font-size: 11px; }
.search { display: flex; align-items: center; gap: 10px; height: 32px; padding: 0 12px; border: 1px solid #a8a8a8; border-radius: 4px; }
.search input { flex: 1; }
.search input::placeholder { color: #999; opacity: 1; }
.right { display: flex; align-items: center; justify-content: flex-end; }
.avatar { width: 22px; height: 22px; margin-right: 10px; border-radius: 50%; background: #10282f; color: #b6cdd6; font-size: 9px; line-height: 22px; text-align: center; }
.w { width: 45px; height: 30px; }

.menubar { display: flex; align-items: center; height: 30px; padding: 2px 14px 0 19px; }
.menubar a { height: 26px; margin-right: 19px; color: #0c0c0c; line-height: 26px; text-decoration: none; }
.menubar a:first-child { margin-right: 26px; }
.menubar a.on { border-bottom: 2px solid #0d3b20; font-weight: 700; }
.comments { gap: 4px; width: 88px; height: 23px; border: 1px solid #8c8c8c; border-radius: 4px; background: #fff; font-weight: 600; }
.share { gap: 4px; width: 68px; height: 23px; margin-left: 8px; border-radius: 4px; background: #00280b; color: #a9d8b4; }
.person { width: 17px; margin-left: 11px; }

.ribbon { display: flex; height: 94px; margin: 0 8px; border-bottom: 1px solid #8f8f8f; border-radius: 6px; background: #fff; box-shadow: 0 2px 1px #b4b4b4; font-size: 11px; line-height: 15px; }
.group { display: flex; flex: none; flex-direction: column; padding-top: 3px; background: linear-gradient(#c6c6c6, #c6c6c6) right center / 1px 84px no-repeat; }
.body { display: flex; height: 72px; }
.mid { justify-content: center; }
.foot { display: grid; align-items: center; height: 16px; font-size: 10px; justify-items: center; white-space: nowrap; }
.foot > * { grid-area: 1 / 1; }
.foot button { justify-self: end; width: 14px; }
.foot svg { width: 8px; height: 8px; }
.launch span { padding-right: 14px; }
.g-clip { width: 163px; }
.g-font { width: 219px; }
.g-align { width: 280px; }
.g-num { width: 150px; }
.g-styles { width: 369px; }
.g-cells { width: 136px; }
.g-edit { width: 202px; }
.g-add { width: 59px; }
.g-data { width: 101px; }
.g-pdf { width: 74px; }
.g-solver { width: 54px; }
.big { flex-direction: column; justify-content: flex-start; padding-top: 4px; line-height: 15px; white-space: nowrap; }
.big > span { margin-top: 3px; text-align: center; }
.big > .c { margin-top: 5px; }
.paste { width: 44px; margin: 0 3px 0 8px; }
.stack { display: flex; flex-direction: column; }
.line { justify-content: flex-start; height: 24px; white-space: nowrap; }
.line > svg:first-child { width: 16px; height: 16px; margin-right: 3px; }
.line .push { margin-left: auto; }
.line .near { margin-left: 4px; }
.g-clip .stack { width: 98px; }
.g-clip .line:nth-child(2) { width: 67px; }
.rows { display: flex; flex-direction: column; padding-top: 3px; }
.r { display: flex; align-items: center; height: 30px; }
.g-font .r, .g-align .rows:first-child, .g-num .r { padding-left: 6px; }
.r-a { gap: 1px; }
.ib { width: 24px; height: 22px; font-size: 12px; }
.ib.on { border: 1px solid #6e6e6e; border-radius: 4px; background: #dadada; }
.ib.lg { font-size: 15px; }
.ib.md { font-size: 13px; }
.sup { width: 6px; height: 4px; margin-bottom: 9px; }
.serif { font-family: "Liberation Serif", serif; font-size: 14px; }
.w18 { width: 18px; }
.w22 { width: 22px; }
.ink { flex-direction: column; font-size: 13px; line-height: 12px; }
.ink::after { content: ""; width: 15px; height: 4px; background: #e8291c; }
.ch { width: 14px; height: 22px; }
.ch.sm { width: 10px; }
.sep { width: 1px; height: 22px; margin: 0 3px; background: #cfcfcf; }
.sep.tight { margin: 0 1px; }
.tall { width: 1px; height: 58px; margin: 7px 8px 0 3px; background: #cfcfcf; }
.g-align .line { width: 124px; height: 30px; }
.g-align .line > svg:first-child { margin-right: 4px; }
.pick { display: grid; height: 23px; border: 1px solid #6e6e6e; border-radius: 4px; align-items: center; }
.pick > * { grid-area: 1 / 1; }
.pick select { width: 100%; height: 100%; padding-left: 2px; }
.pick svg { justify-self: end; margin-right: 2px; pointer-events: none; }
.family { width: 108px; }
.size { width: 47px; }
.format { width: 134px; margin-left: 1px; }
.cond { width: 68px; margin-left: 8px; }
.fat { width: 58px; }
.w40 { width: 40px; }
.g-cells .body { padding-left: 7px; }
.w44 { width: 44px; }
.g-edit .stack { width: 99px; margin-right: 7px; padding-left: 11px; }
.gallery { display: grid; grid-template-columns: 94px 94px 1fr; grid-template-rows: 1fr 1fr; gap: 5px 6px; width: 223px; height: 59px; margin: 7px 0 0 1px; padding-left: 2px; border: 1px solid #a8a8a8; border-radius: 5px; font-size: 12px; }
.gallery button { justify-content: flex-start; padding-left: 4px; }
.gallery .normal { margin: 2px -3px -3px -2px; padding-left: 5px; border: 1px solid #555; box-shadow: inset 0 0 0 1px #ccc; }
.gallery .bad { margin-top: 4px; background: #ff9a9a; color: #8a1212; }
.gallery .good { margin-bottom: 4px; background: #9ada9a; color: #0c4a12; }
.gallery .neutral { margin-bottom: 4px; background: #ffd84f; color: #8a4a08; }
.gallery .more { grid-area: 1 / 3 / 3 / 4; justify-content: center; margin: -1px -1px -1px -2px; padding: 0; border: 1px solid #555; border-radius: 0 5px 5px 0; }
.collapse { width: 24px; height: 20px; margin: auto 2px 3px auto; }

.formula { display: flex; align-items: center; margin: 7px 8px 0; }
.field { display: flex; align-items: center; height: 22px; border: 1px solid #b4b4b4; border-radius: 4px; background: #fff; }
.field input { flex: 1; min-width: 0; height: 100%; font-size: 12px; }
.name { width: 286px; padding: 0 3px 0 4px; }
.formula .grip { margin: 0 9px 0 8px; }
.fx { width: 79px; margin-right: 5px; justify-content: space-between; padding: 0 1px 0 5px; }
.fn { font: italic 700 16px/18px "Liberation Serif", serif; }
.dim { color: #777; }
.value { flex: 1; padding: 0 2px 0 8px; }

.workspace { display: flex; flex: 1; min-height: 0; }
.sheet { flex: 1; min-width: 0; overflow: hidden; background: #fff; }
table { width: 0; border-collapse: separate; border-spacing: 0; table-layout: fixed; color: #000; font: 500 12px/14px Lato, "Open Sans", sans-serif; }
.rowcol { width: 26px; }
th, td { padding: 0; overflow: visible; vertical-align: bottom; white-space: nowrap; }
th { background: #dadada; color: #222; font-weight: 500; text-align: center; }
thead th { height: 23px; padding-bottom: 1px; border-bottom: 1px solid #9c9c9c; background: linear-gradient(#b0b0b0, #b0b0b0) right bottom / 1px 5px no-repeat #dadada; }
tbody th { border-right: 2px solid #b4b4b4; background: linear-gradient(#b0b0b0, #b0b0b0) right bottom / 6px 1px no-repeat #dadada; }
thead .all { padding: 0 4px 2px 12px; }
.all i { display: block; width: 10px; height: 10px; background: #b4b4b4; clip-path: polygon(100% 0, 100% 100%, 0 100%); }
.label { padding-left: 2px; text-align: left; }
.indent { padding-left: 10px; }
.num { padding-right: 3px; text-align: right; }
.money { padding-right: 6px; }
.check { text-align: center; }
.bold, .total, .under, .title, .head { font-weight: 700; }
.title, .head { font-size: 14px; line-height: 18px; }
.italic { padding-right: 5px; font-style: italic; }
.under { text-decoration: underline; }
.total { background: #dadada; }
.thin { border-bottom: 1px solid #111; }
.double { border-bottom: 3px double #111; }
.thick { border-bottom: 2px solid #111; }
.dots { border-bottom: 1px dotted #000; }
.boxed { border-right: 1px dotted #000; }
.boxed.num { padding-right: 2px; }
.boxed.money { padding-right: 5px; }
.vbar { display: flex; flex-direction: column; align-items: center; width: 20px; padding: 10px 0 2px; }
.thumb { flex: 1; width: 8px; margin: 4px 0 14px; border-radius: 4px; background: #2e2e2e; }
.tri { flex: none; width: 10px; height: 7px; background: #2e2e2e; }
.up { clip-path: polygon(50% 0, 100% 100%, 0 100%); }
.down { clip-path: polygon(0 0, 100% 0, 50% 100%); }
.lt, .rt { width: 7px; height: 9px; }
.lt { clip-path: polygon(100% 0, 100% 100%, 0 50%); }
.rt { clip-path: polygon(0 0, 100% 50%, 0 100%); }

.tabs { display: flex; align-items: center; height: 30px; padding: 0 22px 0 12px; }
.nav { width: 30px; height: 24px; }
.sheets { display: flex; align-items: center; align-self: stretch; margin-left: 34px; }
.tab { height: 23px; padding: 0 4px; border-radius: 4px; white-space: nowrap; }
.yellow { background: #ffff9a; }
.purple { border-top: 1px solid #6a3aa0; background: #2e0a55; color: #cfc6f2; font-weight: 400; }
.active { align-self: stretch; align-items: flex-start; height: auto; padding: 2px 4px 0; border: solid #fff; border-width: 3px 1px 0; border-bottom: 3px solid #dadada; border-radius: 0 0 4px 4px; background: linear-gradient(#dcdcff 0 15%, #d6bce0 15% 30%, #b8b4e6 30% 55%, #9a78c0 55%); font-weight: 700; }
.active span { padding-bottom: 2px; border-bottom: 2px solid #12351f; line-height: 15px; }
.div { width: 1px; height: 18px; margin: 0 4px 0 3px; background: #b4b4b4; }
.plus { width: 24px; height: 24px; margin-left: 30px; }
.tabs .grip { margin-right: 19px; }
.hthumb { width: 143px; height: 9px; margin: 0 4px; border-radius: 5px; background: #2e2e2e; }

.status { display: flex; align-items: center; height: 21px; padding: 0 9px 1px 10px; border-top: 1px solid #fff; font-size: 10px; line-height: 18px; white-space: nowrap; }
.macro { margin-left: 18px; }
.acc { margin: 0 2px 0 16px; }
.stat { margin-left: 12px; }
.view { width: 37px; height: 20px; }
.view.on { margin-left: 18px; background: #b8b8b8; }
.step { width: 10px; height: 16px; }
.view + .step { margin-left: 4px; }
.zoom { width: 94px; height: 16px; margin: 0 4px; background: linear-gradient(#333, #333) center / 100% 1px no-repeat; }
.zoom::-webkit-slider-thumb { width: 5px; height: 11px; appearance: none; background: #222; }
.pct { margin-left: 10px; }

.taskbar { display: grid; grid-template-columns: 1fr auto 1fr; align-items: center; height: 44px; border-top: 1px solid #7d9a9e; background: #9acbda; font-size: 11px; line-height: 15px; }
.taskbar p { margin-bottom: 3px; }
.weather { display: flex; align-items: center; gap: 2px; padding-left: 20px; }
.weather span { color: #3a4a55; }
.weather svg { margin-bottom: 4px; }
.apps { display: flex; align-items: center; }
.app-icon { position: relative; width: 41px; height: 43px; }
.run::after { position: absolute; bottom: 4px; left: 16px; width: 10px; height: 3px; border-radius: 2px; background: #555; content: ""; }
.pill { display: flex; align-items: center; gap: 9px; width: 204px; height: 29px; margin: 0 4px 0 3px; padding: 0 7px 0 11px; border-radius: 15px; background: #daffff; box-shadow: 0 1px 1px #7aa0b4; font-size: 12px; }
.pill input { flex: 1; min-width: 0; }
.pill input::placeholder { color: #333; opacity: 1; }
.tray { display: flex; align-items: center; justify-content: flex-end; padding-right: 18px; text-align: right; }
.net { margin: 0 7px 0 17px; }
.tray p { min-width: 67px; }
</style>
